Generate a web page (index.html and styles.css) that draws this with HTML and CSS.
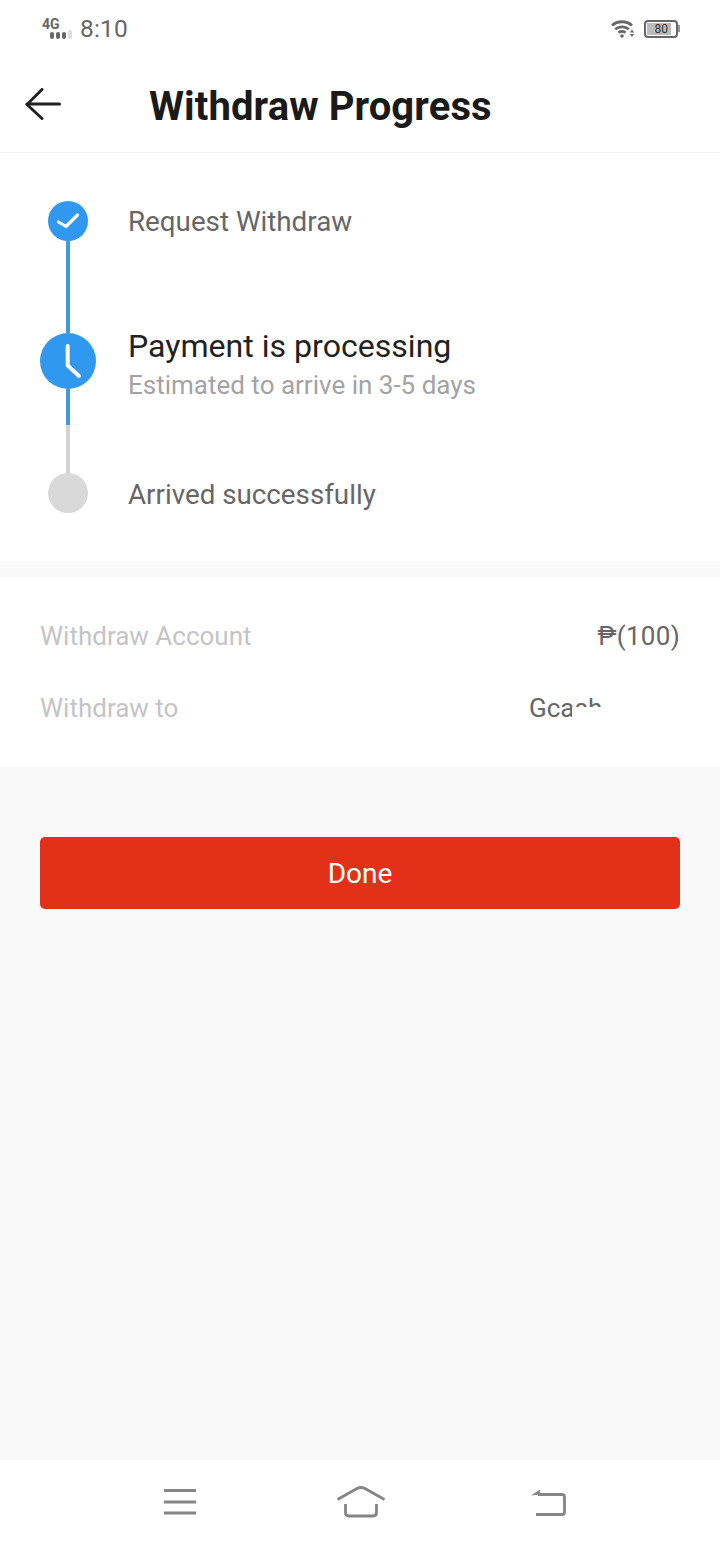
FILE: index.html
```html
<!DOCTYPE html>
<html lang="en">
<head>
<meta charset="utf-8">
<title>Withdraw Progress</title>
<link rel="stylesheet" href="styles.css">
</head>
<body>
<div class="page">
  <div class="status">
    <div class="status-left">
      <div class="net">
        <span class="net-label">4G</span>
        <span class="net-bars"><i class="b on"></i><i class="b on"></i><i class="b on"></i><i class="b off"></i></span>
      </div>
      <span class="time">8:10</span>
    </div>
    <div class="status-right">
      <svg class="wifi" width="24" height="18" viewBox="0 0 24 18" fill="none" stroke="#666" stroke-width="2.800">
        <path d="M1 5.500C6.500 .5 15.500 .5 21 5.500"/>
        <path d="M4.200 9.200C8 6 14 6 17.800 9.200"/>
        <path d="M7.500 12.600C9.800 11 12.200 11 14.500 12.600"/>
        <circle cx="11" cy="16" r="1.800" fill="#666" stroke="none"/>
        <path d="M21 9.500l2.200 3h-4.400zM18.800 14h4.400l-2.200 3z" fill="#666" stroke="none"/>
      </svg>
      <div class="battery">
        <div class="battery-body"><span class="battery-num">80</span></div>
        <span class="battery-tip"></span>
      </div>
    </div>
  </div>

  <header class="header">
    <svg class="back" width="36" height="32" viewBox="0 0 36 32" fill="none" stroke="#222" stroke-width="3" stroke-linecap="round" stroke-linejoin="round">
      <path d="M17 1.500L2 16.500l15 14"/>
      <path d="M2 16h32.500"/>
    </svg>
    <h1 class="title">Withdraw Progress</h1>
  </header>

  <section class="steps">
    <div class="rail">
      <span class="dot dot-done">
        <svg class="tick" width="22" height="16" viewBox="0 0 22 16" fill="none" stroke="#fff" stroke-width="3.200" stroke-linecap="round" stroke-linejoin="round"><path d="M1.500 9l7.500 4.500L20.500 2"/></svg>
      </span>
      <span class="line line-a"></span>
      <span class="dot dot-now">
        <svg width="56" height="56" viewBox="0 0 56 56" fill="none" stroke="#fff" stroke-width="4" stroke-linecap="round" stroke-linejoin="round"><path d="M27.700 13v19.500L39 43"/></svg>
      </span>
      <span class="line line-b"></span>
      <span class="line line-c"></span>
      <span class="dot dot-todo"></span>
    </div>
    <div class="labels">
      <div class="label label-first">Request Withdraw</div>
      <div class="label-now">
        <div class="now-title">Payment is processing</div>
        <div class="now-sub">Estimated to arrive in 3-5 days</div>
      </div>
      <div class="label label-last">Arrived successfully</div>
    </div>
  </section>

  <section class="info">
    <div class="info-row">
      <span class="info-key">Withdraw Account</span>
      <span class="info-val amount">₱(100)</span>
    </div>
    <div class="info-row">
      <span class="info-key">Withdraw to</span>
      <span class="info-val masked">Gcash<span class="mask"></span></span>
    </div>
  </section>

  <main class="rest">
    <button class="done" type="button">Done</button>
  </main>

  <nav class="nav">
    <svg width="34" height="28" viewBox="0 0 34 28" stroke="#858585" stroke-width="3" fill="none"><path d="M1 2.500h32M1 14h32M1 25h32"/></svg>
    <svg class="home" width="50" height="32" viewBox="0 0 50 32" stroke="#858585" stroke-width="2.800" fill="none" stroke-linejoin="round"><path d="M1.500 13.500L21 2.500q4-2 8 0L48.500 13.500"/><path d="M9.500 18v8.500q0 3.500 3.500 3.500h24q3.500 0 3.500-3.500V18"/></svg>
    <svg width="36" height="30" viewBox="0 0 36 30" stroke="#858585" stroke-width="2.800" fill="none"><path d="M1 8.500L10 2.500v5z" fill="#858585" stroke="none"/><path d="M8 7.500h24q2.500 0 2.500 2.500v15q0 2.500-2.500 2.500H6"/></svg>
  </nav>
</div>
</body>
</html>
```

FILE: styles.css
```css
* { box-sizing: border-box; }
html, body { margin: 0; padding: 0; }
body { font-family: Roboto, "Liberation Sans", sans-serif; background: #f9f9f9; color: #666; }
.page { width: 720px; height: 1544px; display: flex; flex-direction: column; background: #f9f9f9; }

.status { height: 57px; background: #fff; display: flex; justify-content: space-between; align-items: center; padding: 0 40px 0 42px; }
.status-left { display: flex; align-items: center; gap: 6px; }
.net { display: flex; flex-direction: column; width: 32px; }
.net-label { font-size: 14px; line-height: 12px; font-weight: 700; color: #666; }
.net-bars { display: flex; gap: 2px; align-items: flex-end; margin-left: 8px; height: 9px; }
.b { display: block; width: 4px; border-radius: 2px; }
.b.on { background: #666; height: 7px; }
.b.off { background: #ddd; height: 9px; }
.time { font-size: 24.500px; color: #666; letter-spacing: 0.200px; }
.status-right { display: flex; align-items: center; gap: 9px; }
.battery { display: flex; align-items: center; }
.battery-body { width: 34px; height: 18px; border: 2px solid #666; border-radius: 4px; background: #fff; padding: 1px; display: flex; }
.battery-num { width: 24px; background: #bbb; font-size: 12px; line-height: 12px; color: #333; text-align: right; padding-right: 3px; }
.battery-tip { width: 2px; height: 7px; background: #999; }

.header { height: 96px; background: #fff; border-bottom: 1px solid #f0f0f0; display: flex; align-items: center; padding: 0 0 2px 25px; gap: 88px; }
.title { margin: 0; font-size: 40px; font-weight: 700; color: #1a1a1a; line-height: 50px; letter-spacing: 0.100px; padding-top: 6px; }

.steps { height: 408px; background: #fff; padding: 48px 40px 0; display: flex; gap: 32px; }
.rail { width: 56px; display: flex; flex-direction: column; align-items: center; }
.dot { display: flex; align-items: center; justify-content: center; border-radius: 50%; flex: none; }
.tick { overflow: visible; }
.dot-done { width: 40px; height: 40px; background: #3098ee; }
.dot-now { width: 56px; height: 56px; background: #3098ee; }
.dot-todo { width: 40px; height: 40px; background: #d9d9d9; }
.line { width: 4px; flex: none; }
.line-a { height: 92px; background: #3f9ad8; }
.line-b { height: 36px; background: #3f9ad8; }
.line-c { height: 48px; background: #d3d3d3; }
.labels { display: flex; flex-direction: column; }
.label { font-size: 27.750px; line-height: 40px; color: #666; }
.label-first { height: 40px; margin-top: 1px; }
.label-now { margin-top: 83px; height: 79px; }
.now-title { font-size: 32.100px; line-height: 42px; color: #222; }
.now-sub { font-size: 26px; line-height: 36px; color: #a3a3a3; }
.label-last { margin-top: 71px; }

.info { margin-top: 16px; height: 190px; background: #fff; padding: 41px 40px 0; display: flex; flex-direction: column; gap: 36px; }
.info-row { display: flex; justify-content: space-between; height: 36px; font-size: 26px; line-height: 36px; }
.info-key { color: #c4c4c4; }
.info-val { color: #666; }
.amount { letter-spacing: 0.300px; }
.masked { position: relative; width: 151px; }
.mask { position: absolute; left: 43px; right: 0; top: 17px; height: 19px; background: #fff; }

.rest { flex: 1; padding: 70px 40px 0; }
.done { display: block; width: 100%; height: 72px; padding: 1px 0 0; background: #e33018; color: #fff; border: 0; border-radius: 5px; font-family: inherit; font-size: 28px; }

.nav { height: 84px; background: #fff; display: flex; justify-content: space-between; align-items: center; padding: 0 154px 0 163px; }
.home { margin-left: -5px; }
```
